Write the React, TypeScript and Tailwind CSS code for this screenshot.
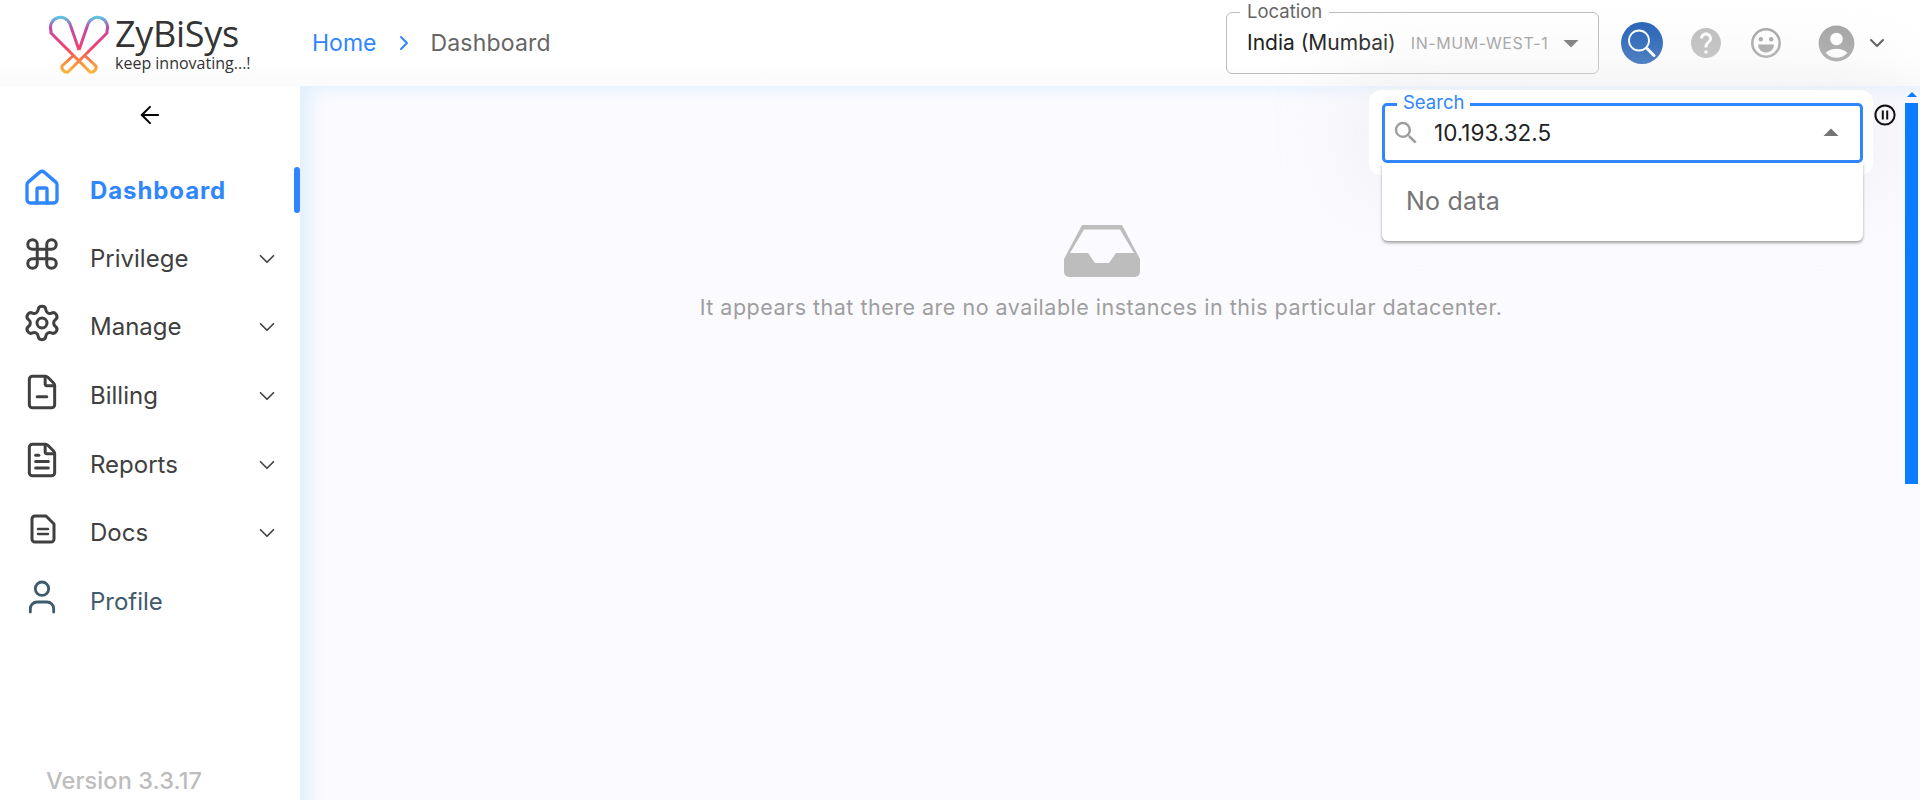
import React from 'react';
import { ArrowLeft, ChevronDown, ChevronRight, Command, FileMinus, FileText, House, Settings, User } from 'lucide-react';
import { MdAccountCircle, MdArrowDropDown, MdArrowDropUp, MdHelp, MdSearch } from 'react-icons/md';

const Logo = () => (
  <svg width="64" height="64" viewBox="48 13 64 64" fill="none" strokeWidth="3" strokeLinejoin="round">
    <defs>
      <linearGradient id="logoGrad" gradientUnits="userSpaceOnUse" x1="80" y1="15" x2="80" y2="75">
        <stop offset="0" stopColor="#4dd9ec" />
        <stop offset="0.22" stopColor="#c04aa8" />
        <stop offset="0.55" stopColor="#f43f6e" />
        <stop offset="0.78" stopColor="#fb8a3c" />
        <stop offset="1" stopColor="#fbbf3a" />
      </linearGradient>
    </defs>
    <path stroke="url(#logoGrad)" d="M80 50 L71 24 A10 10 0 0 0 52 31 L52 33 L91 72 A5 5 0 0 0 97 66 L85 55" />
    <path stroke="url(#logoGrad)" d="M80 50 L89 24 A10 10 0 0 1 108 31 L108 33 L69 72 A5 5 0 0 1 63 66 L75 55" />
  </svg>
);

const DocsIcon = () => (
  <svg width="40" height="40" viewBox="0 0 40 40" fill="none" stroke="#404040" strokeWidth="3" strokeLinejoin="round" strokeLinecap="round">
    <path d="M13 7 H24 L32 15 V30 A3 3 0 0 1 29 33 H13 A3 3 0 0 1 10 30 V10 A3 3 0 0 1 13 7 Z" />
    <path d="M16 20 H26 M16 25 H26" strokeWidth="2.4" />
  </svg>
);

const InboxIcon = () => (
  <svg width="76" height="52" viewBox="0 0 76 52">
    <path
      fill="#bdbdbd"
      fillRule="evenodd"
      d="M18 0 H58 L76 34 V47 A5 5 0 0 1 71 52 H5 A5 5 0 0 1 0 47 V34 Z M20 4.5 L6 28 H24 L31 38 H45 L52 28 H70 L56 4.5 Z"
    />
  </svg>
);

const GrinIcon = () => (
  <svg width="32" height="32" viewBox="0 0 32 32">
    <circle cx="16" cy="16" r="13.7" fill="none" stroke="#a6a6a6" strokeWidth="2.6" />
    <circle cx="10.8" cy="12.3" r="2.2" fill="#a6a6a6" />
    <circle cx="21.2" cy="12.3" r="2.2" fill="#a6a6a6" />
    <path d="M8 17.6 H24 A8 8 0 0 1 8 17.6 Z" fill="#a6a6a6" />
  </svg>
);

const SearchCircle = () => (
  <svg width="42" height="42" viewBox="0 0 42 42">
    <circle cx="21" cy="21" r="21" fill="#205fb4" />
    <circle cx="18" cy="18.5" r="10" fill="none" stroke="#fff" strokeWidth="1.8" />
    <path d="M26 26.5 L33 33.5" stroke="#fff" strokeWidth="3" strokeLinecap="round" />
  </svg>
);

const PauseIcon = () => (
  <svg width="22" height="22" viewBox="0 0 22 22" fill="none" stroke="#111" strokeWidth="2">
    <circle cx="11" cy="11" r="9.6" />
    <path d="M8.8 6.5 V15.5 M13.2 6.5 V15.5" />
  </svg>
);

const navItems = [
  { label: 'Privilege', icon: <Command size={38} strokeWidth={1.9} color="#404040" />, arrow: true },
  { label: 'Manage', icon: <Settings size={40} strokeWidth={1.8} color="#404040" />, arrow: true },
  { label: 'Billing', icon: <FileMinus size={38} strokeWidth={1.9} color="#404040" />, arrow: true },
  { label: 'Reports', icon: <FileText size={38} strokeWidth={1.9} color="#404040" />, arrow: true },
  { label: 'Docs', icon: <DocsIcon />, arrow: true },
  { label: 'Profile', icon: <User size={40} strokeWidth={1.7} color="#3f5b6c" />, arrow: false },
];

export default function App() {
  return (
    <div className="h-screen overflow-hidden flex flex-col bg-white text-[#404040] font-['Inter',sans-serif]">
      {/* Header */}
      <header className="h-[86px] shrink-0 flex items-center bg-gradient-to-b from-white from-70% to-[#fbfbfb]">
        <div className="w-[300px] shrink-0 flex items-center pl-[47px] mt-[3px]">
          <Logo />
          <div className="ml-[4px] font-['Open_Sans',sans-serif] text-[#333333]">
            <div className="text-[36px] leading-[32px] tracking-[-0.3px]">ZyBiSys</div>
            <div className="text-[16px] leading-[18px] mt-[4px] whitespace-nowrap">keep innovating...!</div>
          </div>
        </div>

        {/* Breadcrumb */}
        <nav className="flex items-center pl-[12px] text-[23px]">
          <span className="text-[#2f86ff]">Home</span>
          <ChevronRight size={24} strokeWidth={2} className="ml-[16px] text-[#2f86ff]" />
          <span className="ml-[14px] tracking-[0.2px] text-[#666666]">Dashboard</span>
        </nav>

        {/* Right controls */}
        <div className="ml-auto flex items-center">
          <div className="relative w-[373px] h-[62px] border border-[#bdbdbd] rounded-[6px] flex items-center pl-[20px] pr-[18px] mt-[-1px]">
            <span className="absolute -top-[13px] left-[13px] px-[7px] bg-white text-[18.5px] leading-[22px] text-[#666666]">Location</span>
            <span className="text-[21px] text-[#222222] whitespace-nowrap">India (Mumbai)</span>
            <span className="ml-[15px] text-[16px] tracking-[0.6px] text-[#9e9e9e] whitespace-nowrap">IN-MUM-WEST-1</span>
            <MdArrowDropDown size={36} className="ml-auto -mr-[9px] text-[#757575]" />
          </div>
          <div className="ml-[22px]"><SearchCircle /></div>
          <MdHelp size={36} className="ml-[25px] text-[#bdbdbd]" />
          <div className="ml-[26px]"><GrinIcon /></div>
          <MdAccountCircle size={43} className="ml-[33px] text-[#a3a3a3]" />
          <ChevronDown size={24} strokeWidth={2} className="ml-[7px] mr-[31px] text-[#555555]" />
        </div>
      </header>

      <div className="flex-1 flex min-h-0">
        {/* Sidebar */}
        <aside className="w-[300px] shrink-0 flex flex-col bg-white">
          <div className="h-[58px] flex items-center justify-center">
            <ArrowLeft size={28} strokeWidth={1.7} className="text-black" />
          </div>
          <ul className="mt-[12px] flex flex-col text-[24px]">
            <li className="relative h-[68.6px] flex items-center pl-[22px]">
              <House size={40} strokeWidth={2} className="-mt-[4px] text-[#2f86ff]" />
              <span className="ml-[28px] mt-[1px] font-bold tracking-[0.9px] text-[#2f86ff]">Dashboard</span>
              <span className="absolute right-0 top-[11px] h-[46px] w-[6px] rounded-[3px] bg-[#2f86ff]" />
            </li>
            {navItems.map((item) => (
              <li key={item.label} className="h-[68.6px] flex items-center pl-[22px] pr-[20px]">
                <span className="w-[40px] flex justify-center -mt-[9px]">{item.icon}</span>
                <span className={item.label === 'Profile' ? 'ml-[28px] text-[#3f5b6c]' : 'ml-[28px]'}>{item.label}</span>
                {item.arrow && <ChevronDown size={26} strokeWidth={1.6} className="ml-auto text-[#444444]" />}
              </li>
            ))}
          </ul>
          <div className="mt-auto pb-[2px] pl-[46px] text-[23.5px] tracking-[0.1px] font-medium text-[#bdbdbd]">Version 3.3.17</div>
        </aside>

        {/* Main */}
        <main className="relative flex-1 bg-[#fbfbff] shadow-[inset_18px_10px_18px_-8px_#e0effd] flex flex-col items-center">
          <div className="mt-[139px] -ml-[16px]"><InboxIcon /></div>
          <p className="mt-[14px] -ml-[18px] text-[21.5px] tracking-[0.5px] text-[#9e9e9e]">It appears that there are no available instances in this particular datacenter.</p>

          {/* Search popover */}
          <div className="absolute left-[1069px] top-[4px] w-[504px] h-[85px] rounded-[12px] bg-white shadow-[0_0_70px_30px_rgba(235,235,240,0.45)]" />
          <div className="absolute left-[1082px] top-[17px] w-[481px]">
            <div className="relative h-[60px] rounded-[5px] border-[3px] border-[#2f86ff] flex items-center pl-[6px] pr-[11px]">
              <span className="absolute -top-[15px] left-[12px] px-[6px] bg-white text-[18.5px] leading-[22px] text-[#2f86ff]">Search</span>
              <MdSearch size={30} className="text-[#9e9e9e]" />
              <span className="ml-[13px] text-[22.5px] text-[#222222]">10.193.32.5</span>
              <MdArrowDropUp size={36} className="ml-auto text-[#757575]" />
            </div>
            <div className="h-[78px] rounded-b-[6px] bg-white shadow-[0_2px_3px_rgba(0,0,0,0.35)] flex items-center pl-[24px] text-[25px] tracking-[0.2px] text-[#757575]">No data</div>
          </div>
          <div className="absolute left-[1574px] top-[18px]"><PauseIcon /></div>

          {/* Scrollbar */}
          <div className="absolute right-[2px] top-0 w-[13px] flex flex-col items-center">
            <span className="mt-[6px] w-0 h-0 border-x-[5px] border-x-transparent border-b-[5px] border-b-[#0a7cff]" />
            <span className="mt-[6px] w-[13px] h-[381px] bg-[#0a7cff]" />
          </div>
        </main>
      </div>
    </div>
  );
}
